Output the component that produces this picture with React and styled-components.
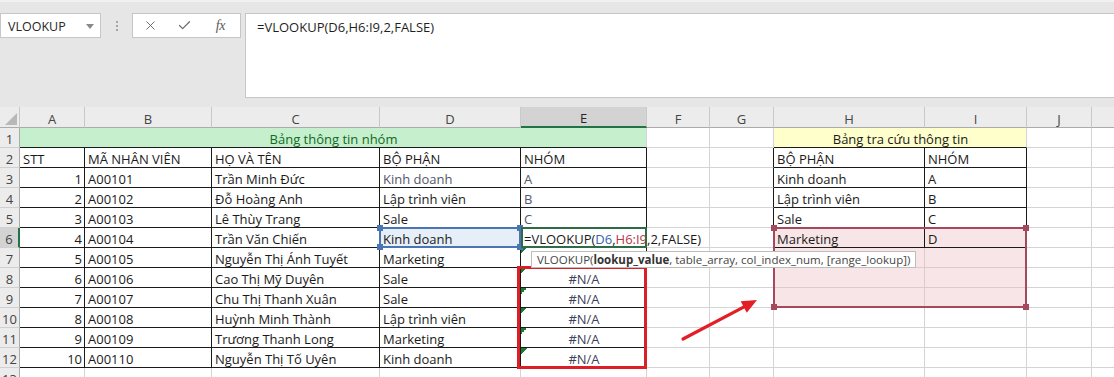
import React from 'react';
import styled, { createGlobalStyle, css } from 'styled-components';
import { X, Check } from 'lucide-react';

const GlobalStyle = createGlobalStyle`
  html, body { margin: 0; padding: 0; background: #ffffff; }
  body { font-family: "Open Sans", "Noto Sans", sans-serif; overflow: hidden; }
  * { box-sizing: border-box; }
`;

const COLS = [
  { key: 'hdr', w: 20 },
  { key: 'A', w: 65 },
  { key: 'B', w: 127 },
  { key: 'C', w: 168 },
  { key: 'D', w: 141 },
  { key: 'E', w: 126 },
  { key: 'F', w: 63 },
  { key: 'G', w: 64 },
  { key: 'H', w: 151 },
  { key: 'I', w: 102 },
  { key: 'J', w: 65 },
  { key: 'K', w: 65 },
];
const colX = {};
{
  let x = 0;
  COLS.forEach((c) => { colX[c.key] = x; x += c.w; });
  colX.END = x;
}
const colW = Object.fromEntries(COLS.map((c) => [c.key, c.w]));
const HEAD_H = 21;
const ROW_H = 20;
const rowY = (r) => HEAD_H + (r - 1) * ROW_H;

const Page = styled.div`
  width: 1114px;
  height: 377px;
  overflow: hidden;
  background: #ffffff;
`;

/* ---------- formula bar ---------- */
const TopArea = styled.div`
  height: 107px;
  background: #e6e6e6;
  border-top: 2px solid #f1f1f1;
  padding-top: 11px;
  display: flex;
  align-items: flex-start;
`;

const NameBox = styled.div`
  width: 101px;
  height: 25px;
  background: #ffffff;
  border: 1px solid #c6c6c6;
  display: flex;
  align-items: center;
  justify-content: space-between;
  padding: 1px 6px 0 7px;
  font-size: 12.5px;
  color: #262626;
`;

const DropArrow = styled.span`
  width: 0;
  height: 0;
  border-left: 4px solid transparent;
  border-right: 4px solid transparent;
  border-top: 5px solid #8a8a8a;
  margin-top: 1px;
`;

const DotsSlot = styled.div`
  width: 31px;
  height: 25px;
  display: flex;
  flex-direction: column;
  align-items: center;
  justify-content: center;
  gap: 2px;
`;

const Dot = styled.span`
  width: 2px;
  height: 2px;
  background: #a6a6a6;
`;

const FxBox = styled.div`
  width: 109px;
  height: 25px;
  background: #ffffff;
  border: 1px solid #c6c6c6;
  display: flex;
  align-items: center;
  color: #6e6e6e;
`;

const FxSlot = styled.div`
  width: ${(p) => p.$w}px;
  display: flex;
  align-items: center;
  justify-content: center;
`;

const FxText = styled.span`
  font-family: "Liberation Serif", "DejaVu Serif", serif;
  font-style: italic;
  font-size: 14px;
  color: #5a5a5a;
  letter-spacing: -0.5px;
`;

const FormulaInput = styled.div`
  margin-left: 4px;
  flex: 1;
  height: 85px;
  background: #ffffff;
  border: 1px solid #c6c6c6;
  border-right: none;
  padding: 4px 11px;
  font-size: 13px;
  line-height: 18px;
  color: #1f1f1f;
`;

/* ---------- sheet grid ---------- */
const SheetWrap = styled.div`
  position: relative;
  width: 1114px;
  height: 270px;
  overflow: hidden;
`;

const Grid = styled.div`
  display: grid;
  grid-template-columns: ${COLS.map((c) => `${c.w}px`).join(' ')};
  grid-template-rows: ${HEAD_H}px repeat(13, ${ROW_H}px);
  width: ${colX.END}px;
  font-size: 13px;
`;

const Corner = styled.div`
  background: #ececec;
  border-right: 1px solid #c9c9c9;
  border-bottom: 1px solid #ababab;
  display: flex;
  align-items: flex-end;
  justify-content: flex-end;
  padding: 0 2px 2px 0;
  &::after {
    content: '';
    width: 0;
    height: 0;
    border-left: 12px solid transparent;
    border-bottom: 12px solid #b8b8b8;
  }
`;

const ColHead = styled.div`
  background: ${(p) => (p.$active ? '#d3d3d3' : '#ececec')};
  border-right: 1px solid #c9c9c9;
  border-bottom: ${(p) => (p.$active ? '2px solid #217346' : '1px solid #ababab')};
  display: flex;
  align-items: center;
  justify-content: center;
  padding-top: 3px;
  color: ${(p) => (p.$active ? '#262626' : '#444444')};
  font-size: 13px;
`;

const RowHead = styled.div`
  background: ${(p) => (p.$active ? '#d3d3d3' : '#ececec')};
  border-right: ${(p) => (p.$active ? '2px solid #217346' : '1px solid #ababab')};
  border-bottom: 1px solid #d0d0d0;
  display: flex;
  align-items: flex-end;
  justify-content: center;
  padding-bottom: 0;
  color: #444444;
  font-size: 13px;
  line-height: 15px;
`;

const Cell = styled.div`
  grid-column: span ${(p) => p.$span || 1};
  background-color: ${(p) => p.$bg || 'transparent'};
  border-right: 1px solid ${(p) => (p.$br ? '#1a1a1a' : p.$grid || '#d4d4d4')};
  border-bottom: 1px solid ${(p) => (p.$bb ? '#1a1a1a' : p.$grid || '#d4d4d4')};
  display: flex;
  align-items: flex-end;
  justify-content: ${(p) =>
    p.$align === 'right' ? 'flex-end' : p.$align === 'center' ? 'center' : 'flex-start'};
  padding: 0 2px 0 3px;
  color: ${(p) => p.$color || '#1a1a1a'};
  line-height: 16px;
  white-space: nowrap;
  min-width: 0;
  ${(p) =>
    p.$flag &&
    css`
      background-image: linear-gradient(135deg, #1d7a35 50%, transparent 50%);
      background-size: 6px 6px;
      background-repeat: no-repeat;
      background-position: 0 0;
    `}
`;

const FormulaInCell = styled.span`
  position: relative;
  z-index: 1;
  background: #ffffff;
  padding-right: 2px;
`;

const Ref = styled.span`
  color: ${(p) => p.$c};
`;

/* ---------- overlays ---------- */
const RangeBox = styled.div`
  position: absolute;
  left: ${(p) => p.$x}px;
  top: ${(p) => p.$y}px;
  width: ${(p) => p.$w}px;
  height: ${(p) => p.$h}px;
  border: ${(p) => p.$bw || 2}px solid ${(p) => p.$c};
  z-index: 3;
  pointer-events: none;
`;

const Handle = styled.span`
  position: absolute;
  width: 6px;
  height: 6px;
  background: ${(p) => p.$c};
  ${(p) => (p.$v === 't' ? 'top: -4px;' : 'bottom: -4px;')}
  ${(p) => (p.$h === 'l' ? 'left: -4px;' : 'right: -4px;')}
`;

const Tooltip = styled.div`
  position: absolute;
  left: ${(p) => p.$x}px;
  top: ${(p) => p.$y}px;
  height: 17px;
  background: #ffffff;
  border: 1px solid #bdbdbd;
  padding: 0 5px;
  font-size: 11.5px;
  line-height: 15px;
  color: #454545;
  white-space: nowrap;
  z-index: 4;
  b { font-weight: 700; color: #333333; }
`;

const ArrowSvg = styled.svg`
  position: absolute;
  left: ${(p) => p.$x}px;
  top: ${(p) => p.$y}px;
  z-index: 4;
  overflow: visible;
`;

/* ---------- data ---------- */
// 'HIDDEN' = #N/A cell that is covered by the function tooltip
const MAIN = [
  [1, 'A00101', 'Trần Minh Đức', 'Kinh doanh', 'A'],
  [2, 'A00102', 'Đỗ Hoàng Anh', 'Lập trình viên', 'B'],
  [3, 'A00103', 'Lê Thùy Trang', 'Sale', 'C'],
  [4, 'A00104', 'Trần Văn Chiến', 'Kinh doanh', 'FORMULA'],
  [5, 'A00105', 'Nguyễn Thị Ánh Tuyết', 'Marketing', 'HIDDEN'],
  [6, 'A00106', 'Cao Thị Mỹ Duyên', 'Sale', '#N/A'],
  [7, 'A00107', 'Chu Thị Thanh Xuân', 'Sale', '#N/A'],
  [8, 'A00108', 'Huỳnh Minh Thành', 'Lập trình viên', '#N/A'],
  [9, 'A00109', 'Trương Thanh Long', 'Marketing', '#N/A'],
  [10, 'A00110', 'Nguyễn Thị Tố Uyên', 'Kinh doanh', '#N/A'],
];

const LOOKUP = [
  ['BỘ PHẬN', 'NHÓM'],
  ['Kinh doanh', 'A'],
  ['Lập trình viên', 'B'],
  ['Sale', 'C'],
  ['Marketing', 'D'],
];

const DIM = '#55566c';
const NA = '#40425a';
const PINK = '#f8e5e7';
const PINK_LINE = '#e0c9cc';

const FormulaText = () => (
  <>
    =VLOOKUP(<Ref $c="#3565ad">D6</Ref>,<Ref $c="#b5384a">H6:I9</Ref>,2,FALSE)
  </>
);

function buildRow(r) {
  const cells = [];
  const push = (key, props, content) =>
    cells.push(
      <Cell key={`${r}-${key}`} {...props}>
        {content}
      </Cell>
    );

  // A..E
  if (r === 1) {
    push('A', { $span: 5, $bg: '#c6efce', $color: '#0f6b22', $align: 'center', $bb: true }, 'Bảng thông tin nhóm');
  } else if (r === 2) {
    ['STT', 'MÃ NHÂN VIÊN', 'HỌ VÀ TÊN', 'BỘ PHẬN', 'NHÓM'].forEach((t, i) =>
      push('ABCDE'[i], { $br: true, $bb: true }, t)
    );
  } else if (r >= 3 && r <= 12) {
    const d = MAIN[r - 3];
    push('A', { $br: true, $bb: true, $align: 'right' }, d[0]);
    push('B', { $br: true, $bb: true }, d[1]);
    push('C', { $br: true, $bb: true }, d[2]);
    push(
      'D',
      { $br: true, $bb: true, $color: r === 3 ? DIM : undefined, $bg: r === 6 ? '#e6eef8' : undefined },
      d[3]
    );
    if (d[4] === 'FORMULA') {
      push('E', { $br: true, $bb: true }, <FormulaInCell><FormulaText /></FormulaInCell>);
    } else if (d[4] === '#N/A') {
      push('E', { $br: true, $bb: true, $align: 'center', $color: NA, $flag: true }, d[4]);
    } else if (d[4] === 'HIDDEN') {
      push('E', { $br: true, $bb: true, $flag: true }, '');
    } else {
      push('E', { $br: true, $bb: true, $color: DIM }, d[4]);
    }
  } else {
    'ABCDE'.split('').forEach((k) => push(k, {}, ''));
  }

  // F
  push('F', {}, '');
  // G (right border black where lookup table sits)
  push('G', { $br: r >= 2 && r <= 6 }, '');

  // H, I
  if (r === 1) {
    push('H', { $span: 2, $bg: '#ffffcc', $align: 'center', $bb: true }, 'Bảng tra cứu thông tin');
  } else if (r >= 2 && r <= 6) {
    const d = LOOKUP[r - 2];
    const bg = r === 6 ? PINK : undefined;
    push('H', { $br: true, $bb: true, $bg: bg }, d[0]);
    push('I', { $br: true, $bb: true, $bg: bg }, d[1]);
  } else if (r >= 7 && r <= 9) {
    push('H', { $bg: PINK, $grid: PINK_LINE }, '');
    push('I', { $bg: PINK, $grid: PINK_LINE }, '');
  } else {
    push('H', {}, '');
    push('I', {}, '');
  }
  push('J', {}, '');
  push('K', {}, '');
  return cells;
}

const Corners = ({ c }) => (
  <>
    <Handle $c={c} $v="t" $h="l" />
    <Handle $c={c} $v="t" $h="r" />
    <Handle $c={c} $v="b" $h="l" />
    <Handle $c={c} $v="b" $h="r" />
  </>
);

export default function App() {
  const rows = Array.from({ length: 13 }, (_, i) => i + 1);
  const colLetters = COLS.slice(1);

  // arrow geometry (tail -> tip)
  const ax = 670;
  const ay = 290 - 107;
  const tail = [13, 49];
  const tip = [87, 10];
  const dx = tip[0] - tail[0];
  const dy = tip[1] - tail[1];
  const len = Math.hypot(dx, dy);
  const ux = dx / len;
  const uy = dy / len;
  const base = [tip[0] - ux * 15, tip[1] - uy * 15];
  const p1 = [base[0] - uy * 6.5, base[1] + ux * 6.5];
  const p2 = [base[0] + uy * 6.5, base[1] - ux * 6.5];

  return (
    <Page>
      <GlobalStyle />
      <TopArea>
        <NameBox>
          <span>VLOOKUP</span>
          <DropArrow />
        </NameBox>
        <DotsSlot>
          <Dot />
          <Dot />
          <Dot />
        </DotsSlot>
        <FxBox>
          <FxSlot $w={36}>
            <X size={15} strokeWidth={1.6} />
          </FxSlot>
          <FxSlot $w={33}>
            <Check size={15} strokeWidth={2} />
          </FxSlot>
          <FxSlot $w={40}>
            <FxText>fx</FxText>
          </FxSlot>
        </FxBox>
        <FormulaInput>=VLOOKUP(D6,H6:I9,2,FALSE)</FormulaInput>
      </TopArea>

      <SheetWrap>
        <Grid>
          <Corner />
          {colLetters.map((c) => (
            <ColHead key={c.key} $active={c.key === 'E'}>
              {c.key}
            </ColHead>
          ))}
          {rows.map((r) => (
            <React.Fragment key={r}>
              <RowHead $active={r === 6}>{r}</RowHead>
              {buildRow(r)}
            </React.Fragment>
          ))}
        </Grid>

        {/* pink reference range H6:I9 */}
        <RangeBox
          $x={colX.H - 1}
          $y={rowY(6) - 1}
          $w={colX.J - colX.H + 1}
          $h={ROW_H * 4 + 1}
          $c="#a44a5c"
        >
          <Corners c="#a44a5c" />
        </RangeBox>

        {/* blue reference D6 */}
        <RangeBox
          $x={colX.D - 1}
          $y={rowY(6) - 1}
          $w={colW.D + 1}
          $h={ROW_H + 1}
          $c="#4a74b4"
        >
          <Corners c="#4a74b4" />
        </RangeBox>

        {/* active cell E6 */}
        <RangeBox
          $x={colX.E}
          $y={rowY(6) - 1}
          $w={colW.E}
          $h={ROW_H + 1}
          $c="#2f6b45"
        />

        <Tooltip $x={531} $y={251 - 107}>
          VLOOKUP(<b>lookup_value</b>, table_array, col_index_num, [range_lookup])
        </Tooltip>

        {/* red highlight box */}
        <RangeBox $x={517} $y={266 - 107} $w={130} $h={103} $bw={3} $c="#dc1f26" />

        <ArrowSvg $x={ax} $y={ay} width="100" height="70" viewBox="0 0 100 70">
          <line
            x1={tail[0]}
            y1={tail[1]}
            x2={base[0] + ux * 2}
            y2={base[1] + uy * 2}
            stroke="#e31e24"
            strokeWidth="3.2"
            strokeLinecap="round"
          />
          <polygon
            points={`${tip[0]},${tip[1]} ${p1[0]},${p1[1]} ${p2[0]},${p2[1]}`}
            fill="#e31e24"
          />
        </ArrowSvg>
      </SheetWrap>
    </Page>
  );
}
